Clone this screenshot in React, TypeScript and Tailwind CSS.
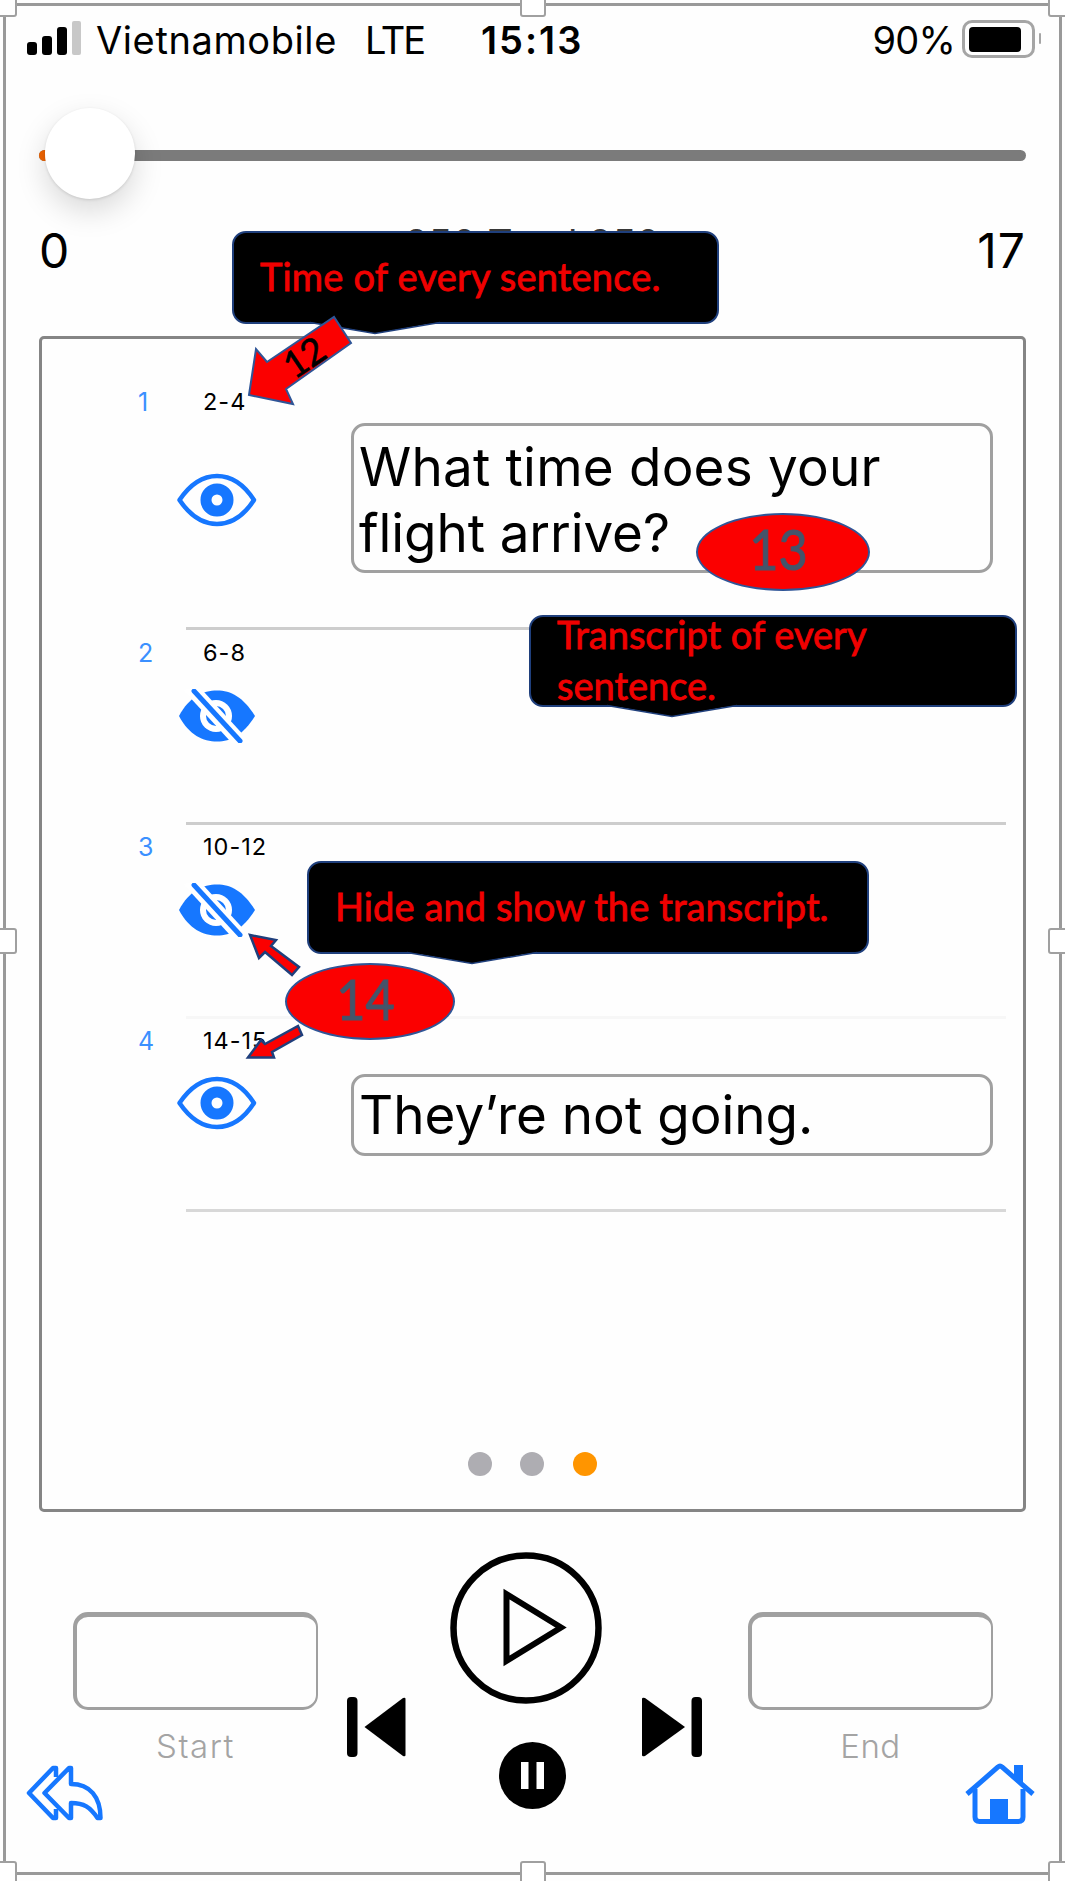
import React from "react";

const BLUE = "#1677ff";

function EyeOpen() {
  return (
    <svg width="80" height="54" viewBox="0 0 80 54" fill="none" className="block">
      <path d="M2.500 27C14 10 27 3 40 3s26 7 37 24C66 44 53 51 40 51S14 44 2.500 27Z" stroke={BLUE} strokeWidth="4.500" strokeLinejoin="round" />
      <circle cx="40" cy="27" r="11" stroke={BLUE} strokeWidth="11" />
    </svg>
  );
}

function EyeHidden() {
  return (
    <svg width="80" height="54" viewBox="0 0 80 54" fill="none" className="block">
      <path d="M2 27C12 8 26 1.500 40 1.500S66 8 78 27C66 46 54 52.500 40 52.500S12 46 2 27Z" fill={BLUE} />
      <circle cx="39" cy="27" r="16" fill="#fff" />
      <circle cx="39" cy="27" r="10" fill={BLUE} />
      <path d="M12-3 68 58" stroke="#fff" strokeWidth="14" />
      <path d="M17 2 63 52" stroke={BLUE} strokeWidth="5" strokeLinecap="round" />
    </svg>
  );
}

function Sentence({
  id,
  time,
  open,
  className,
  iconGap,
  line,
  children,
}: {
  id: string;
  time: string;
  open: boolean;
  className: string;
  iconGap: string;
  line: string;
  children?: React.ReactNode;
}) {
  return (
    <div className={"relative flex " + className}>
      <span className="-ml-px w-[65px] shrink-0 text-[25px] leading-[30px] text-[#3b90ff]">{id}</span>
      <div className="w-[148px] shrink-0">
        <div className="text-[23.5px] leading-[30px] tracking-[1px] whitespace-nowrap">{time}</div>
        <div className={"-ml-[26px] " + iconGap}>{open ? <EyeOpen /> : <EyeHidden />}</div>
      </div>
      {children}
      <div className={"absolute right-0 bottom-0 left-[47px] h-[3px] " + line} />
    </div>
  );
}

function Callout({ className, tail, children }: { className: string; tail: string; children: React.ReactNode }) {
  return (
    <div
      className={
        "absolute flex items-center rounded-[14px] border-2 border-[#1f3f7c] bg-black pl-[26px] font-[Lato] text-[38px] leading-[51px] whitespace-nowrap text-[#f00000] [-webkit-text-stroke:0.8px_#f00000] " +
        className
      }
    >
      <svg width="130" height="14" viewBox="0 0 130 14" className={"absolute -bottom-[13px] " + tail}>
        <path d="M0 0H130V1L65 12.500 0 1Z" fill="#000" />
        <path d="M0 1.500 65 12.500 130 1.500" fill="none" stroke="#1f3f7c" strokeWidth="1.500" />
      </svg>
      {children}
    </div>
  );
}

function Marker({ className, children }: { className: string; children: string }) {
  return (
    <div className={"absolute flex items-center justify-center rounded-[50%] border-2 border-[#2f5597] bg-[#fb0000] font-[Lato] text-[56px] leading-none text-[#44546a] [-webkit-text-stroke:1px_#44546a] " + className}>
      <span className="-mt-[6px] -ml-[9px] scale-x-[0.9]">{children}</span>
    </div>
  );
}

function Handle({ className }: { className: string }) {
  return <div className={"absolute size-[26px] rounded-[3px] border-2 border-[#a0a0a0] bg-white " + className} />;
}

function RangeField({ label, tracking }: { label: string; tracking: string }) {
  return (
    <div className="flex w-[245px] flex-col items-center">
      <div className="h-[98px] w-full rounded-[15px] border-t-[5px] border-r-2 border-b-[3px] border-l-[4px] border-[#a0a0a0]" />
      <div className={"mt-[15px] text-[33px] leading-[42px] font-light text-[#a4a4a4] " + tracking}>{label}</div>
    </div>
  );
}

export default function App() {
  return (
    <div className="relative flex h-[1881px] w-[1065px] flex-col overflow-hidden bg-[#fefefe] font-[Inter] text-black">
      <header className="flex h-[72px] items-center pr-[24px] pl-[27px]">
        <div className="mt-[4px] flex items-end gap-[5px]">
          <div className="h-[13px] w-[10px] rounded-[3px] bg-black" />
          <div className="h-[19px] w-[10px] rounded-[3px] bg-black" />
          <div className="h-[28px] w-[10px] rounded-[3px] bg-black" />
          <div className="h-[34px] w-[9px] rounded-[2px] bg-[#c8c8c8]" />
        </div>
        <span className="mt-[7px] ml-[15px] w-[269px] text-[38px] leading-none tracking-[0.600px]">Vietnamobile</span>
        <span className="mt-[7px] w-[116px] text-[38px] leading-none tracking-[-2px]">LTE</span>
        <span className="mt-[7px] text-[38px] leading-none font-semibold tracking-[2px]">15:13</span>
        <span className="mt-[7px] ml-auto text-[38px] leading-none tracking-[-0.800px]">90%</span>
        <div className="mt-[5px] ml-[7px] flex items-center gap-[4px]">
          <div className="h-[38px] w-[73px] rounded-[10px] border-[3px] border-[#a5a5a5] p-[4px]">
            <div className="h-[25px] w-[52px] rounded-[4px] bg-black" />
          </div>
          <div className="h-[11px] w-[2px] rounded bg-[#a5a5a5]" />
        </div>
      </header>

      <div className="relative mt-[36px] flex h-[91px] items-center pr-[39px] pl-[39px]">
        <div className="mt-[4px] flex h-[11px] w-full overflow-hidden rounded-full bg-[#7b7b7b]">
          <div className="w-[40px] bg-[#f06400]" />
        </div>
        <div className="absolute top-0 left-[45px] h-[91px] w-[90px] rounded-full bg-white shadow-[0_12px_30px_rgba(0,0,0,0.15),0_1px_3px_rgba(0,0,0,0.12)]" />
      </div>

      <div className="mt-[22px] grid h-[60px] grid-cols-3 pr-[39px] pl-[39px] text-[48px] leading-[60px]">
        <span>0</span>
        <span className="h-[13px] overflow-hidden text-center text-[39px] leading-[45px] whitespace-nowrap text-black/80">250 Total 250</span>
        <span className="text-right tracking-[1px]">17</span>
      </div>

      <main className="mx-[39px] mt-[55px] flex h-[1176px] w-[987px] shrink-0 flex-col rounded-[5px] border-[3px] border-[#858585] pr-[17px] pl-[97px]">
        <Sentence id="1" time="2-4" open className="h-[291px] pt-[48px]" iconGap="mt-[56px]" line="bg-[#cdcdcd]">
          <div className="mt-[36px] h-[150px] w-[642px] rounded-[14px] border-[3px] border-[#a0a0a0] pt-[8px] pl-[5px] text-[53px] leading-[66px]">
            <span className="tracking-[0.2px]">What time does your</span>
            <br />
            <span className="tracking-[-0.1px]">flight arrive?</span>
          </div>
        </Sentence>
        <Sentence id="2" time="6-8" open={false} className="h-[195px] pt-[8px]" iconGap="mt-[21px]" line="bg-[#cdcdcd]" />
        <Sentence id="3" time="10-12" open={false} className="h-[194px] pt-[7px]" iconGap="mt-[21px]" line="bg-[#f7f7f7]" />
        <Sentence id="4" time="14-15" open className="h-[193px] pt-[7px]" iconGap="mt-[20px]" line="bg-[#d8d8d8]">
          <div className="mt-[48px] h-[82px] w-[642px] rounded-[14px] border-[3px] border-[#a0a0a0] pt-[5px] pl-[5px] text-[53px] leading-[66px]">
            They’re not going.
          </div>
        </Sentence>
        <div className="mt-[240px] -mr-[16px] -ml-[97px] flex justify-center gap-[28.5px]">
          <div className="size-[24px] rounded-full bg-[#aeadb2]" />
          <div className="size-[24px] rounded-full bg-[#aeadb2]" />
          <div className="size-[24px] rounded-full bg-[#ff9500]" />
        </div>
      </main>

      <footer className="relative mt-[41px] flex h-[290px] justify-between pt-[59px] pr-[72px] pl-[73px]">
        <RangeField label="Start" tracking="tracking-[1.500px]" />
        <div className="-mt-[60px] flex flex-1 flex-col items-center">
          <svg width="152" height="152" viewBox="0 0 152 152" fill="none" className="-ml-[14px] block" stroke="#000">
            <circle cx="76" cy="76" r="72.500" strokeWidth="6.500" />
            <path d="M56.500 42v67L111 75.500Z" strokeWidth="6" />
          </svg>
          <div className="relative -mt-[7px] flex w-full items-start justify-between pr-[46px] pl-[29px]">
            <svg width="60" height="60" viewBox="0 0 60 60">
              <rect width="10.500" height="60" rx="4" />
              <path d="M17.500 30 56 1q2.500-1 2.500 1v56q0 2-2.500 1Z" />
            </svg>
            <svg width="67" height="67" viewBox="0 0 67 67" className="mt-[45px] mr-[-8px] ml-[8px]">
              <circle cx="33.500" cy="33.500" r="33.500" />
              <path d="M22 20h7.500v27H22zM37.500 20H45v27h-7.500z" fill="#fff" />
            </svg>
            <svg width="60" height="60" viewBox="0 0 60 60">
              <path d="M43 30 3 1Q0 0 0 2v56q0 2 3 1Z" />
              <rect x="49.500" width="10.500" height="60" rx="4" />
            </svg>
          </div>
        </div>
        <RangeField label="End" tracking="tracking-[0.500px]" />
        <svg width="78" height="56" viewBox="0 0 78 56" fill="none" stroke={BLUE} strokeWidth="4.500" strokeLinejoin="round" className="absolute top-[212px] left-[26px]">
          <path d="M30 12V3h-3L3 28l24 25h3v-9" />
          <path d="M45 3v16C64 19 74.500 32 74.500 53h-3C64 42 58 38 45 38v15h-2L18.500 28 43 3Z" />
        </svg>
        <svg width="70" height="62" viewBox="0 0 70 62" fill="none" stroke={BLUE} strokeWidth="5" className="absolute top-[210px] right-[30px]">
          <path d="M2 31 33 4q2-2 4 0l31 27" />
          <path d="M10 26v28q0 4.500 4.500 4.500h39q4.500 0 4.500-4.500V26" />
          <path d="M25 36h18v22H25zM49 2h9v21l-9-7z" fill={BLUE} stroke="none" />
        </svg>
      </footer>

      {/* Annotations over the player */}
      <Callout className="top-[231px] left-[232px] h-[93px] w-[487px]" tail="left-[76px]">
        <span className="-mt-[2px] tracking-[0.2px]">Time of every sentence.</span>
      </Callout>
      <Callout className="top-[615px] left-[529px] h-[92px] w-[488px]" tail="left-[76px]">
        <span className="-mt-[3px]">
          Transcript of every
          <br />
          sentence.
        </span>
      </Callout>
      <Callout className="top-[861px] left-[307px] h-[93px] w-[562px]" tail="left-[98px]">
        <span className="-mt-[2px] tracking-[0.1px]">Hide and show the transcript.</span>
      </Callout>
      <Marker className="top-[513px] left-[696px] h-[78px] w-[174px]">13</Marker>
      <svg width="130" height="110" viewBox="240 305 130 110" className="absolute top-[305px] left-[240px]">
        <path d="M249 395 256 349l11 13 67-45 17 26-65 46 7 15Z" fill="#fb0000" stroke="#2f5597" strokeWidth="2" />
      </svg>
      <span className="absolute top-[338px] left-[283px] rotate-[-34deg] font-[Lato] text-[37px] leading-[38px] tracking-[-1px] [-webkit-text-stroke:0.6px_#000]">12</span>
      <svg width="70" height="140" viewBox="240 925 70 140" className="absolute top-[925px] left-[240px]">
        <g fill="#fb0000" stroke="#1f3f7c" strokeWidth="2.500">
          <path d="M250 935 276 940l-5 6 28 21-7 8-27-23-6 6Z" />
          <path d="M248 1057.500 261 1040l4 4 33-18 4 9-30 17 2 5.500Z" />
        </g>
      </svg>
      <Marker className="top-[963px] left-[285px] h-[77px] w-[170px]">14</Marker>

      {/* Selection frame with its resize handles */}
      <div className="pointer-events-none absolute top-[3px] right-[3px] bottom-[6px] left-[3px] border-[3px] border-[#999999]" />
      <Handle className="-top-[9px] -left-[9px]" />
      <Handle className="-top-[9px] left-[520px]" />
      <Handle className="-top-[9px] -right-[9px]" />
      <Handle className="top-[928px] -left-[9px]" />
      <Handle className="top-[928px] -right-[9px]" />
      <Handle className="-bottom-[6px] -left-[9px]" />
      <Handle className="-bottom-[6px] left-[520px]" />
      <Handle className="-right-[9px] -bottom-[6px]" />
    </div>
  );
}
